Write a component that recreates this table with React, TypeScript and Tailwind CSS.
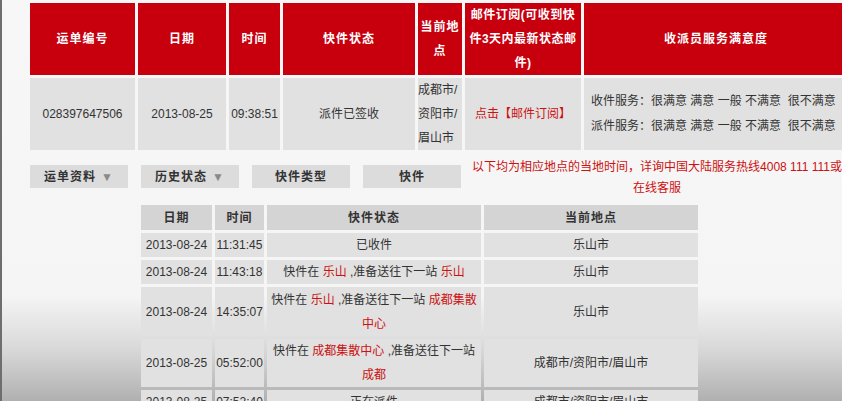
import React from "react";

const font = {
  fontFamily: '"Liberation Sans", "Noto Sans CJK SC", sans-serif',
};

const R = ({ children }: { children: React.ReactNode }) => (
  <span className="text-[#cc1111]">{children}</span>
);

type Row = {
  date: string;
  time: string;
  status: React.ReactNode;
  loc: string;
  h: string;
};

const rows: Row[] = [
  { date: "2013-08-24", time: "11:31:45", status: "已收件", loc: "乐山市", h: "h-[24px]" },
  {
    date: "2013-08-24",
    time: "11:43:18",
    status: (
      <>
        快件在 <R>乐山</R> ,准备送往下一站 <R>乐山</R>
      </>
    ),
    loc: "乐山市",
    h: "h-[24px]",
  },
  {
    date: "2013-08-24",
    time: "14:35:07",
    status: (
      <>
        快件在 <R>乐山</R> ,准备送往下一站 <R>成都集散</R>
        <br />
        <R>中心</R>
      </>
    ),
    loc: "乐山市",
    h: "h-[49px]",
  },
  {
    date: "2013-08-25",
    time: "05:52:00",
    status: (
      <>
        快件在 <R>成都集散中心</R> ,准备送往下一站
        <br />
        <R>成都</R>
      </>
    ),
    loc: "成都市/资阳市/眉山市",
    h: "h-[47px]",
  },
  { date: "2013-08-25", time: "07:52:40", status: "正在派件", loc: "成都市/资阳市/眉山市", h: "h-[24px]" },
];

export default function App() {
  return (
    <div
      style={font}
      className="w-[842px] h-[401px] overflow-hidden border-l-2 border-[#6e6e6e] bg-[linear-gradient(to_bottom,#f7f7f7_0px,#f5f5f5_295px,#d8d8d8_350px,#b0b0b0_401px)] text-[12px] text-[#333]"
    >
      {/* top table */}
      <table className="ml-[25px] w-[824px] table-fixed border-separate border-spacing-[3px] leading-[24px]">
        <colgroup>
          <col className="w-[105px]" />
          <col className="w-[88px]" />
          <col className="w-[51px]" />
          <col className="w-[132px]" />
          <col className="w-[44px]" />
          <col className="w-[116px]" />
          <col className="w-[264px]" />
        </colgroup>
        <thead>
          <tr className="h-[72px] bg-[#c8000e] text-white text-center">
            <th className="p-0 font-bold tracking-[1px]">运单编号</th>
            <th className="p-0 font-bold tracking-[1px]">日期</th>
            <th className="p-0 font-bold tracking-[1px]">时间</th>
            <th className="p-0 font-bold tracking-[1px]">快件状态</th>
            <th className="p-0 font-bold tracking-[1px]">
              当前地
              <br />点
            </th>
            <th className="p-0 font-bold tracking-[0.5px] whitespace-nowrap">
              邮件订阅(可收到快
              <br />
              件3天内最新状态邮
              <br />
              件)
            </th>
            <th className="p-0 font-bold tracking-[1px]">收派员服务满意度</th>
          </tr>
        </thead>
        <tbody>
          <tr className="h-[72px] bg-[#e1e1e1] text-center">
            <td className="p-0">028397647506</td>
            <td className="p-0">2013-08-25</td>
            <td className="p-0">09:38:51</td>
            <td className="p-0">派件已签收</td>
            <td className="p-0 text-left">成都市/资阳市/眉山市</td>
            <td className="p-0 text-[#cc1111]">点击【邮件订阅】</td>
            <td className="p-0 pl-[7px] text-left whitespace-nowrap leading-[25px]">
              <div>收件服务：很满意 满意 一般 不满意 &nbsp;很不满意</div>
              <div>派件服务：很满意 满意 一般 不满意 &nbsp;很不满意</div>
            </td>
          </tr>
        </tbody>
      </table>

      {/* buttons + notice */}
      <div className="flex items-start pl-[28px]">
        <div className="mt-[12px] flex gap-[13px] shrink-0">
          <div className="flex h-[23px] w-[98px] items-center justify-center bg-[#dcdcdc] font-bold tracking-[1px]">
            运单资料<span className="ml-[5px] text-[12px] font-normal text-[#8a8a8a]">▼</span>
          </div>
          <div className="flex h-[23px] w-[98px] items-center justify-center bg-[#dcdcdc] font-bold tracking-[1px]">
            历史状态<span className="ml-[5px] text-[12px] font-normal text-[#8a8a8a]">▼</span>
          </div>
          <div className="flex h-[23px] w-[98px] items-center justify-center bg-[#dcdcdc] font-bold tracking-[1px]">
            快件类型
          </div>
          <div className="flex h-[23px] w-[98px] items-center justify-center bg-[#dcdcdc] font-bold tracking-[1px]">
            快件
          </div>
        </div>
        <div className="ml-[5px] mt-[4px] w-[382px] shrink-0 whitespace-nowrap text-center leading-[21px] text-[#cc1111]">
          以下均为相应地点的当地时间，详询中国大陆服务热线4008 111 111或
          <br />
          在线客服
        </div>
      </div>

      {/* history table */}
      <table className="ml-[136px] mt-[3px] w-[563px] table-fixed border-separate border-spacing-[3px] leading-[24px] text-center">
        <colgroup>
          <col className="w-[71px]" />
          <col className="w-[49px]" />
          <col className="w-[214px]" />
          <col className="w-[214px]" />
        </colgroup>
        <thead>
          <tr className="h-[25px] bg-[#d4d4d4]">
            <th className="p-0 font-bold tracking-[1px]">日期</th>
            <th className="p-0 font-bold tracking-[1px]">时间</th>
            <th className="p-0 font-bold tracking-[1px]">快件状态</th>
            <th className="p-0 font-bold tracking-[1px]">当前地点</th>
          </tr>
        </thead>
        <tbody>
          {rows.map((r, i) => (
            <tr key={i} className={`${r.h} bg-[#e1e1e1]`}>
              <td className="p-0 whitespace-nowrap">{r.date}</td>
              <td className="p-0 whitespace-nowrap">{r.time}</td>
              <td className="p-0">{r.status}</td>
              <td className="p-0">{r.loc}</td>
            </tr>
          ))}
        </tbody>
      </table>
    </div>
  );
}
